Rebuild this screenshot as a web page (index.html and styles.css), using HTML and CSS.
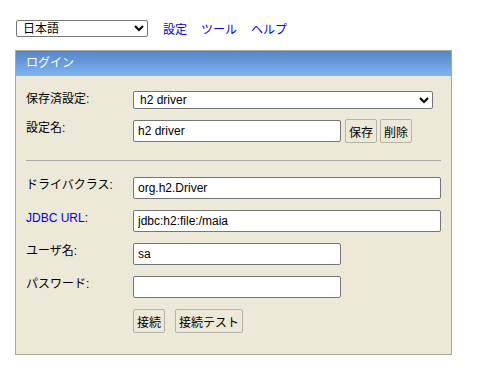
FILE: index.html
```html
<!DOCTYPE html>
<html lang="ja">
<head>
<meta charset="utf-8">
<title>H2 Console</title>
<link rel="stylesheet" href="styles.css">
</head>
<body>
<div class="topbar">
  <select class="lang">
    <option>日本語</option>
  </select>
  <a href="#" class="toplink">設定</a>
  <a href="#" class="toplink">ツール</a>
  <a href="#" class="toplink">ヘルプ</a>
</div>
<div class="panel">
  <div class="panel-head">ログイン</div>
  <div class="panel-body">
    <div class="row row-first">
      <div class="label">保存済設定:</div>
      <select class="field field-select">
        <option>h2 driver</option>
      </select>
    </div>
    <div class="row row-name">
      <div class="label">設定名:</div>
      <input class="field field-short" value="h2 driver">
      <div class="btns">
        <button class="btn">保存</button>
        <button class="btn">削除</button>
      </div>
    </div>
    <div class="sep"></div>
    <div class="row">
      <div class="label">ドライバクラス:</div>
      <input class="field field-long" value="org.h2.Driver">
    </div>
    <div class="row">
      <div class="label"><a href="#" class="jdbc">JDBC URL</a>:</div>
      <input class="field field-long" value="jdbc:h2:file:/maia">
    </div>
    <div class="row">
      <div class="label">ユーザ名:</div>
      <input class="field field-short" value="sa">
    </div>
    <div class="row">
      <div class="label">パスワード:</div>
      <input class="field field-short" type="password" value="">
    </div>
    <div class="row row-actions">
      <div class="label"></div>
      <div class="actions">
        <button class="btn">接続</button>
        <button class="btn">接続テスト</button>
      </div>
    </div>
  </div>
</div>
</body>
</html>
```
FILE: styles.css
```css
* { box-sizing: border-box; }
body {
  margin: 0;
  padding: 20px 0 0 15px;
  background: #ffffff;
  font-family: "Liberation Sans", "Noto Sans CJK JP", sans-serif;
  font-size: 12px;
  color: #000;
}
.topbar {
  display: flex;
  align-items: center;
  height: 17px;
  margin-left: 1px;
}
.lang {
  width: 132px;
  height: 17px;
  font: 12px "Liberation Sans", "Noto Sans CJK JP", sans-serif;
  border: 1px solid #767676;
  border-radius: 2px;
  background: #fff;
  padding: 0 0 0 2px;
  margin-right: 15px;
}
.toplink {
  color: #0000ee;
  text-decoration: none;
  margin-right: 14px;
  font-size: 12px;
}
.panel {
  margin-top: 13px;
  width: 437px;
  border: 1px solid #aca899;
  background: #ece9d8;
}
.panel-head {
  height: 25px;
  line-height: 24px;
  padding-left: 10px;
  color: #fff;
  font-size: 12px;
  background: linear-gradient(#5685c9, #7eb4f0);
}
.panel-body {
  padding: 15px 10px 21px 10px;
}
.row {
  display: flex;
  align-items: flex-start;
  margin-top: 11px;
}
.row-first { margin-top: 0; }
.row-name { margin-top: 11px; }
.label {
  width: 107px;
  flex: none;
  line-height: 17px;
  padding-top: 0;
}
.row-first .label { padding-top: 0; }
.jdbc { color: #0000ee; text-decoration: none; }
.field {
  height: 22px;
  font: 12px "Liberation Sans", "Noto Sans CJK JP", sans-serif;
  border: 1px solid #767676;
  border-radius: 2px;
  background: #fff;
  padding: 0 4px;
  color: #000;
}
.field-select {
  width: 300px;
  height: 18px;
  padding: 0 0 0 2px;
}
.field-short { width: 208px; margin-top: 0; }
.field-long { width: 308px; }
.btns {
  display: flex;
  gap: 3px;
  margin-left: 4px;
  margin-top: -1px;
}
.btn {
  height: 24px;
  padding: 0 3px;
  font: 12px "Noto Sans CJK JP", "Liberation Sans", sans-serif;
  background: #ece9d8;
  border: 1px solid #b5b2a6;
  border-radius: 2px;
  color: #000;
}
.sep {
  margin: 17px 0 0 0;
  border-top: 1px solid #a8a8a8;
  width: 415px;
  height: 17px;
}
.sep + .row { margin-top: 0; }
.actions {
  display: flex;
  gap: 10px;
}
```
